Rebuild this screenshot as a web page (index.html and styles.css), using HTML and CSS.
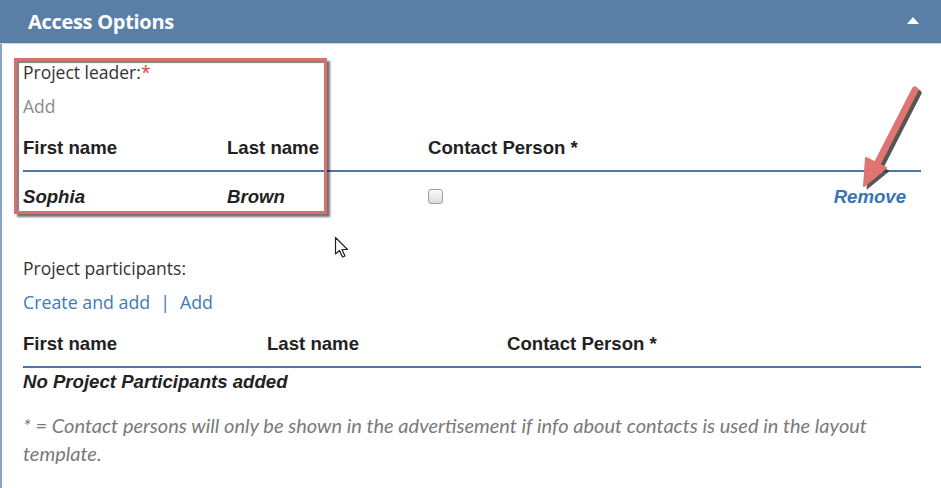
FILE: index.html
```html
<!DOCTYPE html>
<html lang="en">

<head>
    <meta charset="UTF-8">
    <meta name="viewport" content="width=device-width, initial-scale=1.0">
    <title>Access Options</title>
    <link rel="stylesheet" href="styles.css">
</head>

<body>
    <div class="panel">
        <div class="panel-head">
            <h2>Access Options</h2>
            <span class="caret"></span>
        </div>
        <div class="panel-body">
            <div class="field-label">Project leader:<span class="req">*</span></div>
            <div class="add-link">Add</div>
            <table class="people leader">
                <thead>
                    <tr>
                        <th class="col-first">First name</th>
                        <th class="col-last">Last name</th>
                        <th>Contact Person *</th>
                        <th></th>
                    </tr>
                </thead>
                <tbody>
                    <tr>
                        <td>Sophia</td>
                        <td>Brown</td>
                        <td><span class="check"></span></td>
                        <td class="remove">Remove</td>
                    </tr>
                </tbody>
            </table>

            <div class="field-label participants">Project participants:</div>
            <div class="links"><span>Create and add</span><span class="sep">|</span><span>Add</span></div>
            <table class="people members">
                <thead>
                    <tr>
                        <th class="col-first">First name</th>
                        <th class="col-last">Last name</th>
                        <th>Contact Person *</th>
                    </tr>
                </thead>
                <tbody>
                    <tr>
                        <td colspan="3" class="empty">No Project Participants added</td>
                    </tr>
                </tbody>
            </table>

            <p class="note">* = Contact persons will only be shown in the advertisement if info about contacts is used in the layout template.</p>
        </div>
    </div>

    <!-- annotations drawn over the screenshot -->
    <div class="mark-box"></div>
    <svg class="mark-arrow" width="80" height="115" viewBox="0 0 80 115">
        <g transform="translate(3,3)" fill="#2b2b2b" stroke="#2b2b2b" opacity="0.8">
            <line x1="65" y1="10" x2="26" y2="86" stroke-width="7" stroke-linecap="round" />
            <polygon points="14,106 16,78 36,88" />
        </g>
        <g fill="#e07472" stroke="#e07472">
            <line x1="65" y1="10" x2="26" y2="86" stroke-width="7" stroke-linecap="round" />
            <polygon points="14,106 16,78 36,88" stroke-width="2" stroke-linejoin="round" />
        </g>
    </svg>
    <svg class="cursor" width="16" height="24" viewBox="0 0 16 24">
        <path d="M1.5 1.5 L1.5 18 L5.5 14.5 L8.5 21 L11 20 L8 13.5 L13.5 13.5 Z" fill="#fff" stroke="#222" stroke-width="1.2" stroke-linejoin="round" />
    </svg>
</body>

</html>
```

FILE: styles.css
```css
body {
    margin: 0;
    padding: 0;
    background-color: #fff;
    font-family: "Open Sans", Arial, sans-serif;
    color: #222;
}

.panel {
    width: 941px;
    height: 488px;
    overflow: hidden;
}

.panel-head {
    height: 43px;
    background-color: #5a7fa7;
    border-bottom: 1px solid #c9d6e4;
    display: flex;
    justify-content: space-between;
    align-items: center;
    padding: 0 22px 0 28px;
}

.panel-head h2 {
    margin: 0;
    color: #fff;
    font-size: 20px;
    font-weight: 700;
    letter-spacing: -0.3px;
}

.caret {
    width: 0;
    height: 0;
    border-left: 6px solid transparent;
    border-right: 6px solid transparent;
    border-bottom: 7px solid #fff;
    margin-top: -2px;
}

.panel-body {
    border-left: 2px solid #87a4c5;
    height: 444px;
    padding: 16px 20px 0 21px;
}

.field-label {
    font-size: 17.5px;
    line-height: 24px;
    color: #333;
}

.req {
    color: #e0443a;
}

.add-link {
    margin-top: 10px;
    font-size: 17.5px;
    line-height: 24px;
    color: #8a8a8a;
}

table.people {
    width: 898px;
    border-collapse: collapse;
    font-family: "Liberation Sans", Arial, sans-serif;
    font-size: 18.6px;
}

table.people th {
    text-align: left;
    font-weight: bold;
    line-height: 24px;
    padding: 0 0 10px 0;
    border-bottom: 2px solid #4d76a6;
    color: #222;
}

table.people td {
    font-style: italic;
    font-weight: bold;
    line-height: 24px;
    padding: 0;
}

.leader {
    margin-top: 18px;
}

.leader td {
    padding-top: 13px !important;
}

.leader .col-first {
    width: 204px;
}

.leader .col-last {
    width: 201px;
}

.check {
    display: inline-block;
    width: 13px;
    height: 13px;
    border: 1px solid #a0a0a0;
    border-radius: 3px;
    background: linear-gradient(#fafafa, #dcdcdc);
    vertical-align: -1px;
}

.remove {
    text-align: right;
    padding-right: 15px !important;
    color: #3a74b5;
}

.participants {
    margin-top: 47px;
}

.links {
    margin-top: 10px;
    font-size: 17.8px;
    line-height: 24px;
    color: #3f7ab6;
}

.links .sep {
    margin: 0 10px;
    color: #3f7ab6;
}

.members {
    margin-top: 18px;
}

.members .col-first {
    width: 244px;
}

.members .col-last {
    width: 240px;
}

.members td.empty {
    padding-top: 2px;
}

.note {
    margin: 17px 0 0 0;
    font-family: Lato, "Open Sans", sans-serif;
    font-style: italic;
    font-size: 20px;
    line-height: 28px;
    color: #7a7a7a;
    width: 880px;
}

/* annotation overlays */
.mark-box {
    position: absolute;
    left: 14px;
    top: 58px;
    width: 307px;
    height: 150px;
    border: 3px solid #d7716f;
    box-shadow: 3px 3px 2px rgba(0, 0, 0, 0.55), inset 2px 2px 1px rgba(0, 0, 0, 0.5);
}

.mark-arrow {
    position: absolute;
    left: 850px;
    top: 80px;
}

.cursor {
    position: absolute;
    left: 334px;
    top: 236px;
}
```
